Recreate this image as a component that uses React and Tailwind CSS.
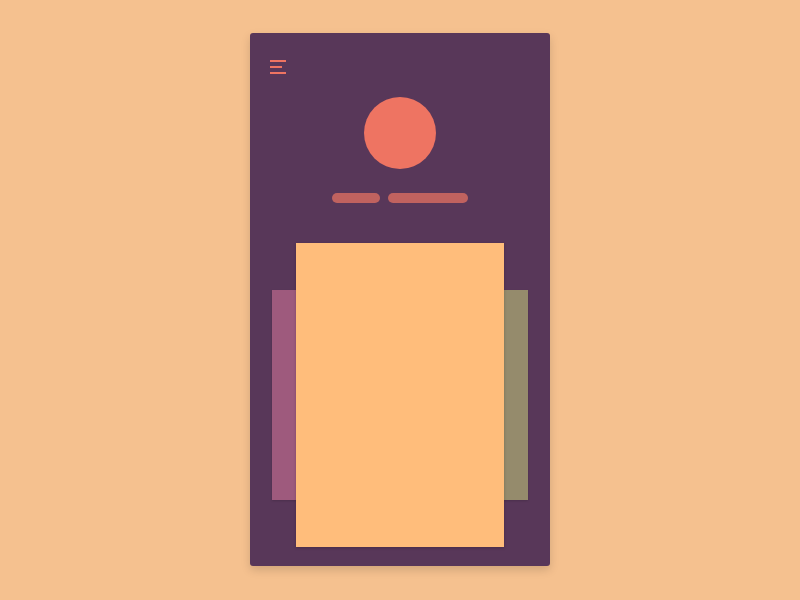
export default function App() {
  return (
    <div className="min-h-[600px] w-full bg-[#f5c18f] flex justify-center pt-[33px]">
      <div className="w-[300px] h-[533px] bg-[#583759] rounded-[3px] shadow-[0_4px_10px_rgba(0,0,0,0.15)] flex flex-col">
        <div className="pl-5 pt-[27px] flex flex-col gap-1">
          <div className="w-4 h-[2px] bg-[#ee7462]" />
          <div className="w-3 h-[2px] bg-[#ee7462]" />
          <div className="w-4 h-[2px] bg-[#ee7462]" />
        </div>
        <div className="flex justify-center mt-[23px]">
          <div className="w-[72px] h-[72px] rounded-full bg-[#ee7462]" />
        </div>
        <div className="flex justify-center gap-2 mt-6">
          <div className="w-12 h-[10px] rounded-full bg-[#c0625f]" />
          <div className="w-20 h-[10px] rounded-full bg-[#c0625f]" />
        </div>
        <div className="relative mt-10 h-[304px]">
          <div className="absolute left-[22px] top-[47px] w-[143px] h-[210px] bg-[#9e5a7d] shadow-[0_1px_2px_rgba(0,0,0,0.15)]" />
          <div className="absolute left-[135px] top-[47px] w-[143px] h-[210px] bg-[#958b6c] shadow-[0_1px_2px_rgba(0,0,0,0.15)]" />
          <div className="absolute left-[46px] top-0 w-[208px] h-[304px] bg-[#ffbd7b] shadow-[0_1px_3px_rgba(0,0,0,0.2)]" />
        </div>
      </div>
    </div>
  );
}
